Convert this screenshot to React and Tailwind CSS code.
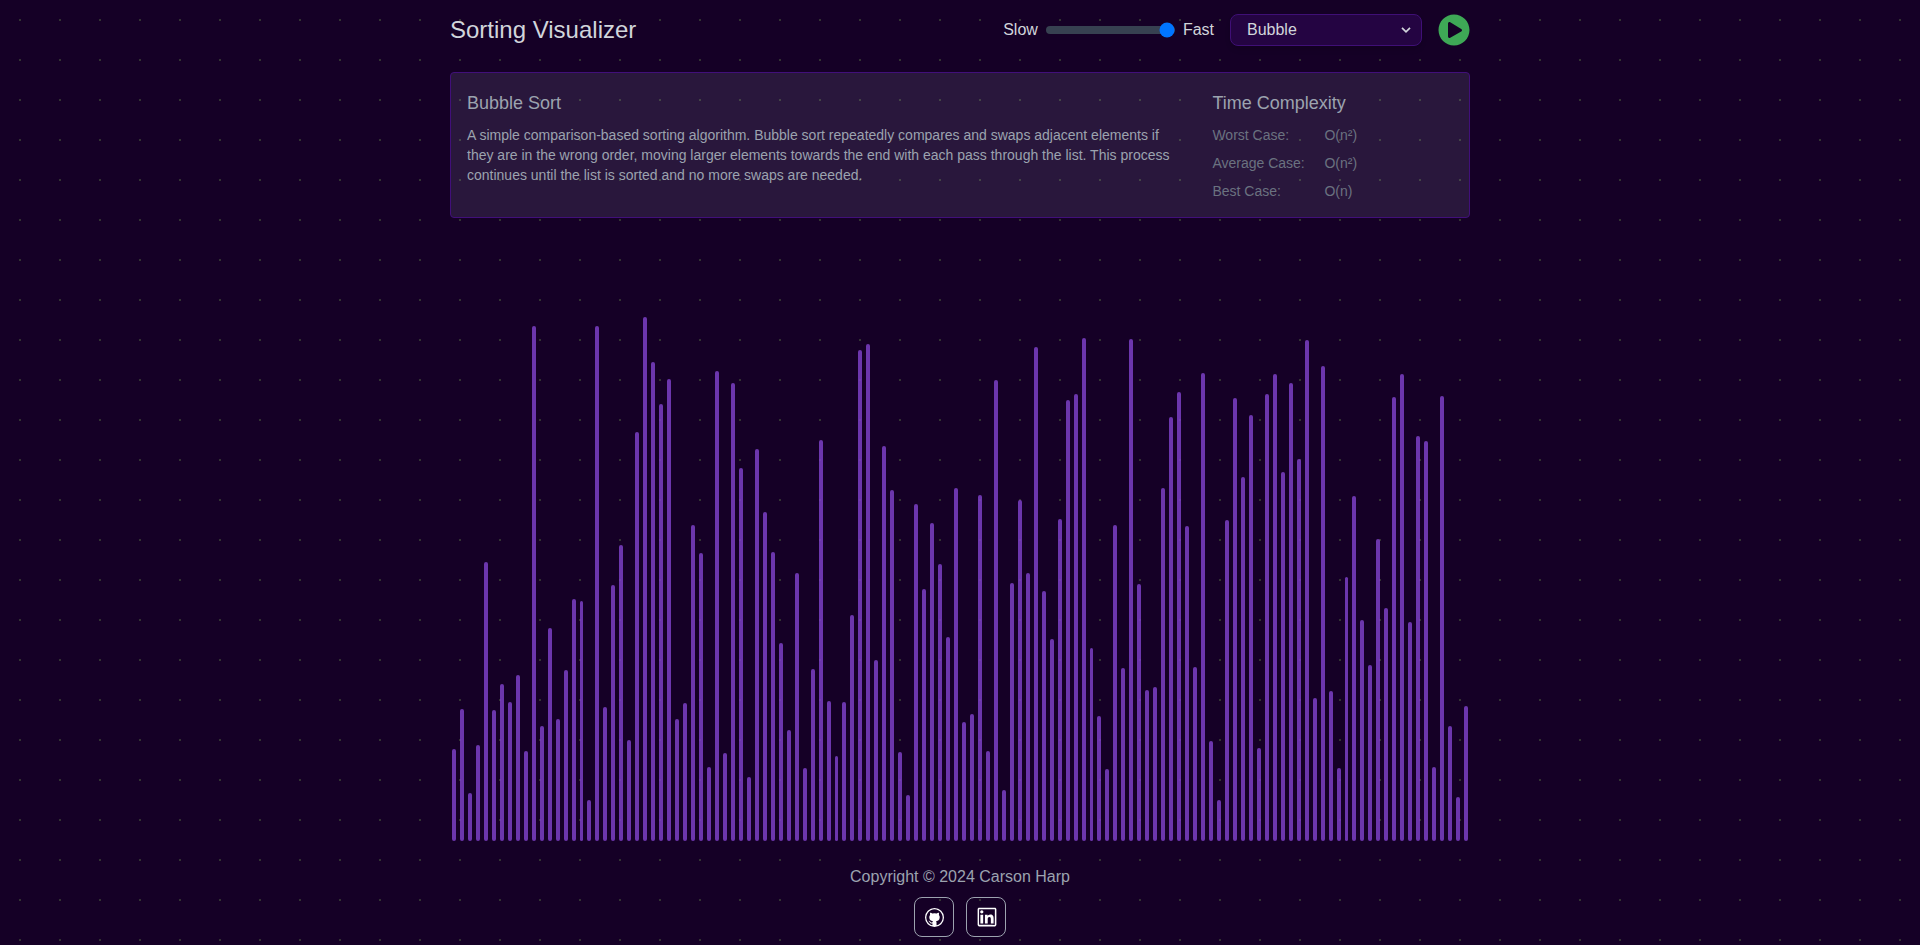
import { useState } from "react";
import { FaPlayCircle } from "react-icons/fa";
import { VscGithub } from "react-icons/vsc";
import { AiOutlineLinkedin } from "react-icons/ai";

const VALUES = [
  92, 132, 48, 96, 279, 131, 157, 139, 166, 90, 515, 115, 213, 122, 171, 242,
  240, 41, 515, 134, 256, 296, 101, 409, 524, 479, 437, 462, 122, 138, 316, 288,
  74, 470, 88, 458, 373, 64, 392, 329, 289, 198, 111, 268, 73, 172, 401, 140,
  85, 139, 226, 491, 497, 181, 395, 351, 89, 46, 337, 252, 318, 277, 204, 353,
  119, 127, 346, 90, 461, 51, 258, 341, 268, 494, 250, 202, 322, 441, 447, 503,
  193, 125, 72, 316, 173, 502, 257, 151, 154, 353, 424, 449, 315, 174, 468, 100,
  41, 321, 443, 364, 426, 93, 447, 467, 369, 458, 382, 501, 143, 475, 150, 73,
  264, 345, 221, 176, 302, 233, 444, 467, 219, 405, 400, 74, 445, 115, 44, 135,
];

const COMPLEXITY = [
  ["Worst Case:", "O(n²)"],
  ["Average Case:", "O(n²)"],
  ["Best Case:", "O(n)"],
];

function SpeedSlider() {
  const [speed, setSpeed] = useState(100);
  return (
    <div className="flex items-center gap-2">
      <span>Slow</span>
      <input
        type="range"
        min="1"
        max="100"
        value={speed}
        onChange={(e) => setSpeed(Number(e.target.value))}
        className="h-2 w-[129px] appearance-none rounded-lg bg-[#374151]"
      />
      <span>Fast</span>
    </div>
  );
}

function AlgorithmSelect() {
  return (
    <button className="flex h-8 w-48 items-center justify-between rounded-lg border border-[#3f0f76] bg-[#240442] pr-2.5 pl-4 shadow-md">
      <span>Bubble</span>
      <svg viewBox="0 0 10 6" className="h-1.5 w-2.5" fill="none" stroke="currentColor" strokeWidth="1.7">
        <path d="M1 0.8 5 4.8 9 0.8" />
      </svg>
    </button>
  );
}

function Header() {
  return (
    <header className="flex h-15 items-center justify-between text-[#d1d5db]">
      <h1 className="text-2xl">Sorting Visualizer</h1>
      <div className="flex items-center gap-4">
        <SpeedSlider />
        <AlgorithmSelect />
        <button className="text-[#3ea856]">
          <FaPlayCircle className="h-8 w-8" />
        </button>
      </div>
    </header>
  );
}

function InfoPanel() {
  return (
    <section className="mt-3 flex rounded border border-[#410f7a] bg-[#e0e0ff]/10 p-4 text-[#9ca3af]">
      <div className="flex flex-1 flex-col gap-2 pr-8">
        <h2 className="text-lg">Bubble Sort</h2>
        <p className="text-sm">
          A simple comparison-based sorting algorithm. Bubble sort repeatedly compares and swaps adjacent elements if
          they are in the wrong order, moving larger elements towards the end with each pass through the list. This
          process continues until the list is sorted and no more swaps are needed.
        </p>
      </div>
      <div className="flex w-[240.6px] flex-col gap-2">
        <h2 className="text-lg">Time Complexity</h2>
        {COMPLEXITY.map(([label, value]) => (
          <div key={label} className="flex text-sm text-[#6b7280]">
            <span className="w-28">{label}</span>
            <span>{value}</span>
          </div>
        ))}
      </div>
    </section>
  );
}

function Bars() {
  return (
    <div className="flex flex-1 items-end">
      {VALUES.map((value, i) => (
        <div key={i} className="mx-0.5 flex-1 rounded bg-[#8243cf]/80" style={{ height: value }} />
      ))}
    </div>
  );
}

function Footer() {
  return (
    <footer className="flex flex-col items-center gap-2 pt-6 pb-2 text-[#9ca3af]">
      <p>Copyright © 2024 Carson Harp</p>
      <div className="flex gap-3 text-white">
        <a className="flex size-10 items-center justify-center rounded-lg border border-[#9ca3af] pl-px">
          <VscGithub className="size-[19px]" />
        </a>
        <a className="flex size-10 items-center justify-center rounded-lg border border-[#9ca3af] pl-px">
          <AiOutlineLinkedin className="size-6" />
        </a>
      </div>
    </footer>
  );
}

export default function App() {
  return (
    <div className="h-[945px] overflow-hidden bg-[#150026] bg-[radial-gradient(#333333_1px,transparent_1px)] bg-[size:40px_40px] font-['Liberation_Sans',sans-serif]">
      <div className="mx-auto flex h-full w-[1020px] flex-col">
        <Header />
        <InfoPanel />
        <Bars />
        <Footer />
      </div>
    </div>
  );
}
